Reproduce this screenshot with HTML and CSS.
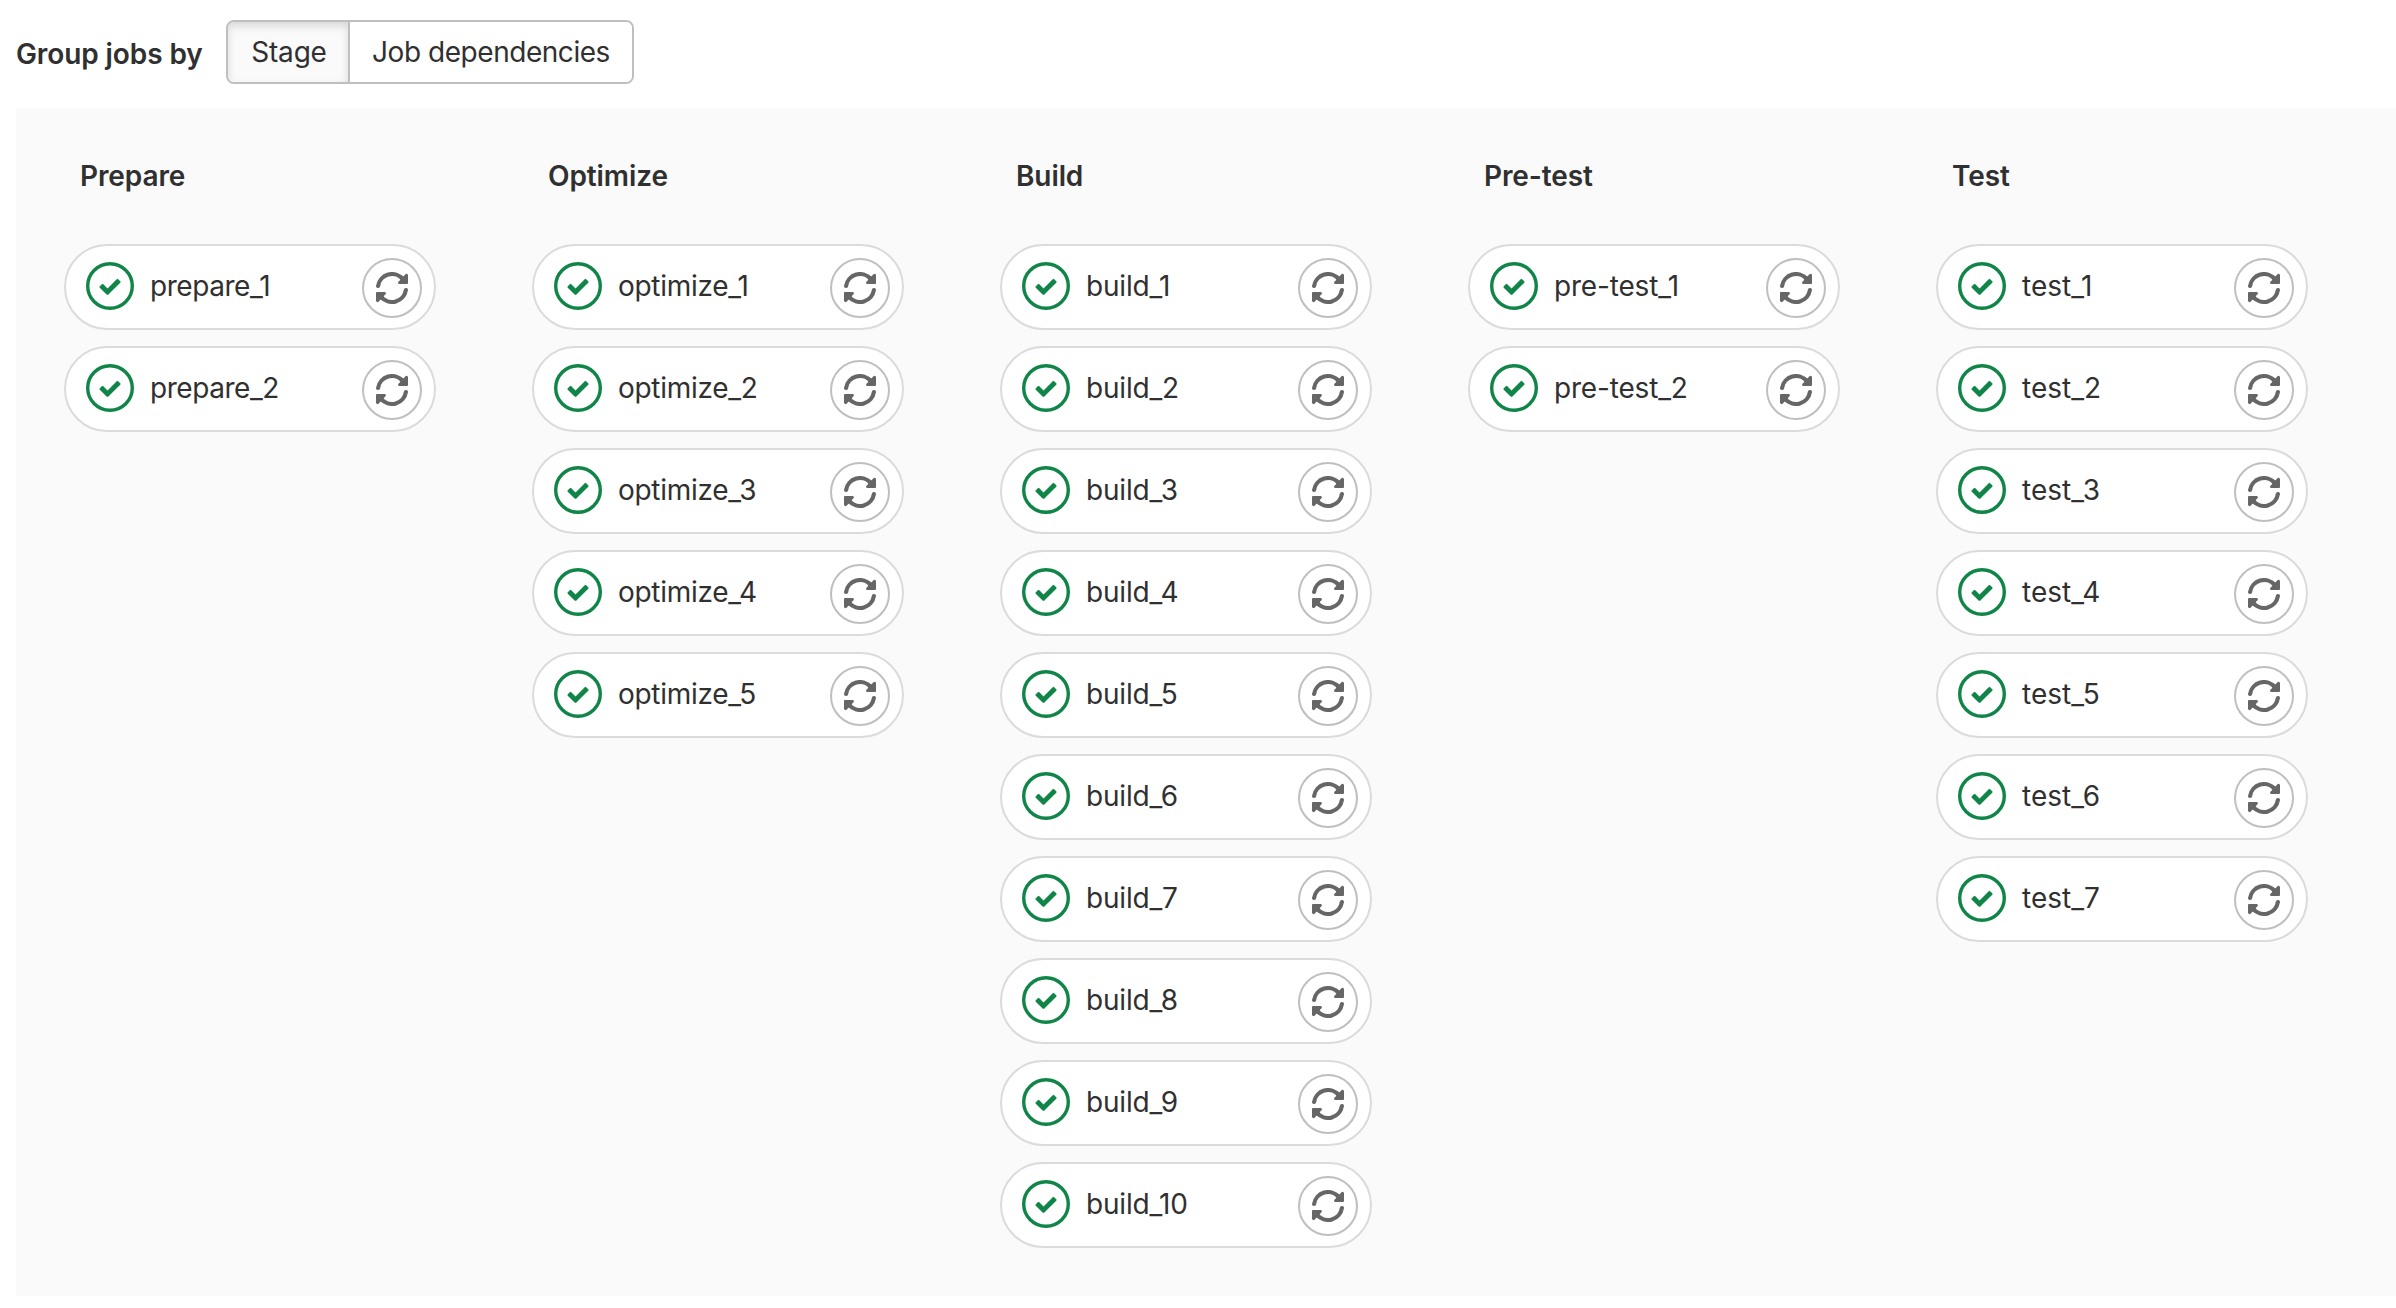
FILE: index.html
```html
<!DOCTYPE html>
<html lang="en">
<head>
<meta charset="utf-8">
<title>Pipeline</title>
<link rel="stylesheet" href="styles.css">
</head>
<body>
<svg class="sprite" aria-hidden="true">
  <symbol id="success" viewBox="0 0 48 48">
    <circle cx="24" cy="24" r="22.3" fill="none" stroke="#108548" stroke-width="3.4"/>
    <path transform="scale(3.4286)" fill="#108548" d="M6.278 7.697L5.045 6.464a.296.296 0 0 0-.42-.002l-.613.614a.298.298 0 0 0 .002.42l1.91 1.909a.5.5 0 0 0 .703.005l.265-.265L9.997 6.04a.291.291 0 0 0-.009-.408l-.614-.614a.29.29 0 0 0-.408-.009L6.278 7.697z"/>
  </symbol>
  <symbol id="retry" viewBox="0 0 32 32">
    <g id="retry-half">
      <path d="M2.1 14A14 13.9 0 0 1 26.8 7.2" fill="none" stroke="#666" stroke-width="4.2" stroke-linecap="round"/>
      <path d="M32 3V11Q32 12 31 12H23.2Q21.9 12 22.1 10.4Q22.3 9.4 23.6 8.8L26 4.4L27.6 4.2L29.4 2.2Q31.2 1.2 32 3Z" fill="#666"/>
    </g>
    <use href="#retry-half" transform="rotate(180 16 16)"/>
  </symbol>
</svg>
<header class="toolbar">
  <span class="toolbar-label">Group jobs by</span>
  <div class="segmented">
    <button class="segment active">Stage</button>
    <button class="segment dependencies">Job dependencies</button>
  </div>
</header>
<main class="graph" id="graph"></main>
<script src="graph.js"></script>
</body>
</html>
```
FILE: styles.css
```css
* { box-sizing: border-box; }
body {
  margin: 0;
  background: #fff;
  color: #303030;
  font: 28px/40px Inter, "Liberation Sans", sans-serif;
  overflow: hidden;
}
.sprite { display: none; }
.toolbar {
  display: flex;
  align-items: flex-start;
  height: 108px;
  padding: 20px 16px;
}
.toolbar-label {
  width: 210px;
  padding-top: 14px;
  font-weight: 600;
  letter-spacing: -.1px;
  white-space: nowrap;
}
.segmented {
  display: flex;
  width: 408px;
  height: 64px;
  border: 2px solid #bfbfbf;
  border-radius: 8px;
  overflow: hidden;
}
.segment {
  flex: 1;
  padding: 0;
  border: 0;
  background: #fff;
  color: inherit;
  font: inherit;
  letter-spacing: -.2px;
  white-space: nowrap;
}
.segment.dependencies { letter-spacing: -.46px; }
.segment.active {
  flex: 0 0 122px;
  padding-left: 2px;
  border-right: 2px solid #bfbfbf;
  background: #fafafa;
  box-shadow: inset 0 4px 8px rgba(0, 0, 0, .14);
}
.graph {
  display: grid;
  grid-template-columns: repeat(5, 372px);
  column-gap: 96px;
  align-items: start;
  height: 1188px;
  margin-left: 16px;
  padding: 48px;
  background: #fafafa;
}
.stage {
  display: flex;
  flex-direction: column;
  gap: 16px;
}
.stage-title {
  height: 72px;
  margin: 0;
  padding-left: 16px;
  font-size: 28px;
  font-weight: 600;
  letter-spacing: -.1px;
}
.job {
  display: flex;
  align-items: center;
  height: 86px;
  padding: 0 12px 0 20px;
  border: 2px solid #dbdbdb;
  border-radius: 43px;
  background: #fff;
}
.status {
  width: 48px;
  height: 48px;
  margin: -2px 16px 0 0;
}
.job-name { flex: 1; margin-top: -2px; white-space: nowrap; }
.stage-prepare .job-name { letter-spacing: -.45px; }
.stage-optimize .job-name { letter-spacing: -.3px; }
.stage-build .job-name { letter-spacing: -.2px; }
.stage-pre-test .job-name { letter-spacing: -.18px; }
.retry {
  display: flex;
  align-items: center;
  justify-content: center;
  width: 60px;
  height: 60px;
  margin-top: 2px;
  padding: 0;
  border: 2px solid #bfbfbf;
  border-radius: 50%;
  background: #fff;
}
.retry svg { width: 32px; height: 32px; }
```
FILE: graph.js
```js
const stages = [
  ["Prepare", 2],
  ["Optimize", 5],
  ["Build", 10],
  ["Pre-test", 2],
  ["Test", 7],
];

const job = (name) => `
  <div class="job">
    <svg class="status"><use href="#success"/></svg>
    <span class="job-name">${name}</span>
    <button class="retry" aria-label="Retry"><svg><use href="#retry"/></svg></button>
  </div>`;

document.getElementById("graph").innerHTML = stages.map(([title, count]) => `
  <section class="stage stage-${title.toLowerCase()}">
    <h2 class="stage-title">${title}</h2>
    ${Array.from({ length: count }, (_, i) => job(`${title.toLowerCase()}_${i + 1}`)).join("")}
  </section>`).join("");
```
